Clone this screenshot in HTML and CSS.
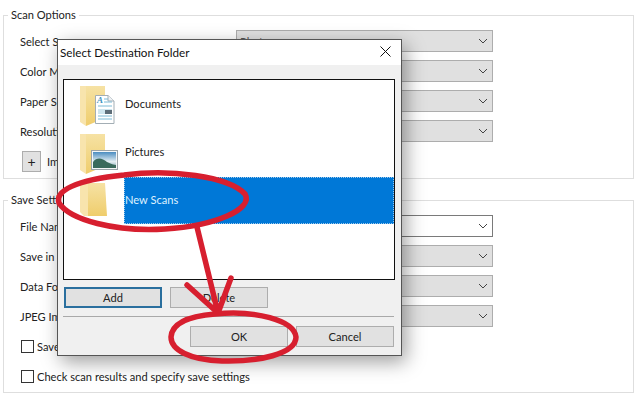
FILE: index.html
```html
<!DOCTYPE html>
<html>
<head>
  <title>Select Destination Folder</title>
  <link rel="stylesheet" href="styles.css">
</head>
<body>
  <svg class="defs" width="0" height="0">
    <defs>
      <linearGradient id="folderBack" x1="0" y1="0" x2="0" y2="1">
        <stop offset="0" stop-color="#f6e2a4"/>
        <stop offset="1" stop-color="#efcd6c"/>
      </linearGradient>
      <linearGradient id="sky" x1="0" y1="0" x2="0" y2="1">
        <stop offset="0" stop-color="#4a8cc0"/>
        <stop offset="0.6" stop-color="#e3eef2"/>
        <stop offset="1" stop-color="#7fa6b2"/>
      </linearGradient>
      <symbol id="folder" viewBox="0 0 60 48">
        <path d="M22 5H41V37L22 45Z" fill="url(#folderBack)"/>
        <path d="M16 5H22V45L16 41Z" fill="#f8e4ad"/>
      </symbol>
      <symbol id="folder-open" viewBox="0 0 60 48">
        <path d="M24 6H41L43 39H24Z" fill="url(#folderBack)"/>
        <path d="M16 6H24V39H20L16 35Z" fill="#f8e4ad"/>
      </symbol>
    </defs>
  </svg>

  <div class="page">
    <fieldset class="group first">
      <legend>Scan Options</legend>
      <div class="row"><span class="label">Select Source</span><div class="select">Photo<svg class="chev" viewBox="0 0 10 6"><path d="M1 1L5 5L9 1"/></svg></div></div>
      <div class="row"><span class="label">Color Mode</span><div class="select"><svg class="chev" viewBox="0 0 10 6"><path d="M1 1L5 5L9 1"/></svg></div></div>
      <div class="row"><span class="label">Paper Size</span><div class="select"><svg class="chev" viewBox="0 0 10 6"><path d="M1 1L5 5L9 1"/></svg></div></div>
      <div class="row"><span class="label">Resolution</span><div class="select"><svg class="chev" viewBox="0 0 10 6"><path d="M1 1L5 5L9 1"/></svg></div></div>
      <div class="row"><button class="plus">+</button><span>Image Processing</span></div>
    </fieldset>

    <fieldset class="group second">
      <legend>Save Settings</legend>
      <div class="row"><span class="label">File Name</span><div class="select white"><svg class="chev" viewBox="0 0 10 6"><path d="M1 1L5 5L9 1"/></svg></div></div>
      <div class="row"><span class="label">Save in</span><div class="select"><svg class="chev" viewBox="0 0 10 6"><path d="M1 1L5 5L9 1"/></svg></div></div>
      <div class="row"><span class="label">Data Format</span><div class="select"><svg class="chev" viewBox="0 0 10 6"><path d="M1 1L5 5L9 1"/></svg></div></div>
      <div class="row"><span class="label">JPEG Image Quality</span><div class="select"><svg class="chev" viewBox="0 0 10 6"><path d="M1 1L5 5L9 1"/></svg></div></div>
      <div class="row"><span class="check"></span><span>Save the scanned images to a subfolder</span></div>
      <div class="row"><span class="check"></span><span>Check scan results and specify save settings</span></div>
    </fieldset>
  </div>

  <div class="dialog">
    <div class="titlebar">
      <span>Select Destination Folder</span>
      <svg class="close" viewBox="0 0 11 11"><path d="M0.5 0.5L10.5 10.5M10.5 0.5L0.5 10.5"/></svg>
    </div>
    <div class="dialog-body">
      <div class="list">
        <div class="item">
          <svg class="icon" viewBox="0 0 60 48">
            <use href="#folder"/>
            <path d="M31.5 14.5H44L50 20V42.5H31.5Z" fill="#fff" stroke="#a3aeb5"/>
            <path d="M44 14.5V20H50" fill="#eef2f5" stroke="#a3aeb5"/>
            <text class="doc-a" x="33" y="22">A</text>
            <path d="M40 18H44M40 21H48M34 25H48M34 35H48M34 38H48" stroke="#7dbad6" fill="none"/>
            <path d="M34 28H48V33H34Z" fill="#cfe6ef"/>
            <path d="M41 29H48V33H41Z" fill="#5d6d78"/>
          </svg>
          <span class="name">Documents</span>
        </div>
        <div class="item">
          <svg class="icon" viewBox="0 0 60 48">
            <use href="#folder"/>
            <rect x="27.5" y="21.5" width="26" height="19" fill="#f4f6f7" stroke="#9aa3a8"/>
            <rect x="29" y="23" width="23" height="16" fill="url(#sky)"/>
            <path d="M29 33C33 28 38 29 43 33C47 35 50 36 52 36V39H29Z" fill="#3a6a5c"/>
          </svg>
          <span class="name">Pictures</span>
        </div>
        <div class="item selected">
          <svg class="icon" viewBox="0 0 60 48">
            <use href="#folder-open"/>
          </svg>
          <span class="name">New Scans</span>
        </div>
      </div>
      <div class="list-buttons">
        <button class="btn default">Add</button>
        <button class="btn">Delete</button>
      </div>
      <div class="sep"></div>
      <div class="dialog-buttons">
        <button class="btn">OK</button>
        <button class="btn">Cancel</button>
      </div>
    </div>
  </div>

  <!-- red marks drawn over the screenshot -->
  <svg class="marks" viewBox="0 0 641 402">
    <path d="M124 175C170 169 228 176 245 194C254 209 215 226 165 229C115 232 70 220 59 203C55 191 75 180 124 175Z"/>
    <path d="M197 227L218 313M187 285L218 313L231 278"/>
    <path d="M215 314C255 310 294 320 296 337C296 354 258 362 222 361C190 360 171 350 171 337C172 322 190 316 215 314Z"/>
  </svg>
</body>
</html>
```

FILE: styles.css
```css
* {
  box-sizing: border-box;
}

html, body {
  margin: 0;
  height: 100%;
  overflow: hidden;
}

body {
  position: relative;
  background-color: #fff;
  color: #222;
  font-family: Lato, sans-serif;
  font-size: 11.1px;
}

.defs {
  position: absolute;
}

.page {
  padding: 6px 7px 0 3px;
}

.group {
  margin: 0;
  padding: 6px 16px 5px;
  border: 1px solid #dedede;
}

.group legend {
  margin-left: -12px;
  padding: 0 3px;
  line-height: 18px;
}

.first {
  padding-bottom: 6px;
}

.second {
  margin-top: 12px;
}

.row {
  display: flex;
  align-items: center;
  height: 22px;
  margin-bottom: 8px;
}

.row:last-child {
  margin-bottom: 0;
}

.label {
  width: 216px;
}

.select {
  display: flex;
  align-items: center;
  justify-content: space-between;
  width: 257px;
  height: 22px;
  padding: 0 4px 0 3px;
  background-color: #e0e0e0;
  border: 1px solid #adadad;
  color: #555;
}

.select.white {
  background-color: #fff;
  border-color: #7a7a7a;
}

.select .chev {
  margin-left: auto;
}

.chev {
  width: 10px;
  height: 6px;
  fill: none;
  stroke: #444;
  stroke-width: 1;
}

.plus {
  width: 19px;
  height: 21px;
  margin: 0 6px 0 2px;
  padding: 0;
  background-color: #e1e1e1;
  border: 1px solid #adadad;
  font-family: inherit;
  font-size: 14px;
  color: #222;
}

.check {
  width: 13px;
  height: 13px;
  margin: 0 3px 0 1px;
  background-color: #fff;
  border: 1px solid #333;
}

.dialog {
  position: absolute;
  left: 57px;
  top: 39px;
  width: 345px;
  height: 317px;
  background-color: #f0f0f0;
  border: 1px solid #555;
  box-shadow: 4px 6px 18px rgba(0, 0, 0, 0.38);
}

.titlebar {
  display: flex;
  align-items: center;
  justify-content: space-between;
  height: 25px;
  padding: 0 10px 2px 2px;
  background-color: #fff;
  font-size: 11.7px;
  color: #111;
}

.close {
  width: 11px;
  height: 11px;
  fill: none;
  stroke: #111;
  stroke-width: 1;
}

.dialog-body {
  padding: 14px 6px 0 5px;
}

.list {
  height: 201px;
  padding-top: 1px;
  background-color: #fff;
  border: 1px solid #111;
}

.item {
  display: flex;
  align-items: center;
  height: 48px;
}

.icon {
  flex: none;
  width: 60px;
  height: 48px;
}

.doc-a {
  font-family: "Liberation Serif", serif;
  font-size: 9px;
  font-style: italic;
  font-weight: bold;
  fill: #3f93bd;
}

.name {
  flex: 1;
  align-self: stretch;
  display: flex;
  align-items: center;
  padding: 0 0 3px 1px;
}

.selected .name {
  height: 47px;
  padding-left: 0;
  background-color: #0078d7;
  border: 1px dotted #9cc9ec;
  color: #dff1ff;
}

.btn {
  width: 98px;
  height: 21px;
  padding: 0;
  background-color: #e1e1e1;
  border: 1px solid #adadad;
  font-family: inherit;
  font-size: 11.1px;
  color: #222;
}

.btn.default {
  border: 2px solid #2a6f9e;
}

.list-buttons {
  display: flex;
  gap: 8px;
  margin: 7px 0 0 1px;
}

.sep {
  height: 1px;
  margin: 8px 1px 0 0;
  background-color: #a9a9a9;
}

.dialog-buttons {
  display: flex;
  justify-content: flex-end;
  gap: 8px;
  margin: 9px 1px 0 0;
}

.marks {
  position: absolute;
  left: 0;
  top: 0;
  width: 641px;
  height: 402px;
  fill: none;
  stroke: #d71f2f;
  stroke-width: 5.5;
  stroke-linecap: round;
  stroke-linejoin: round;
}
```
